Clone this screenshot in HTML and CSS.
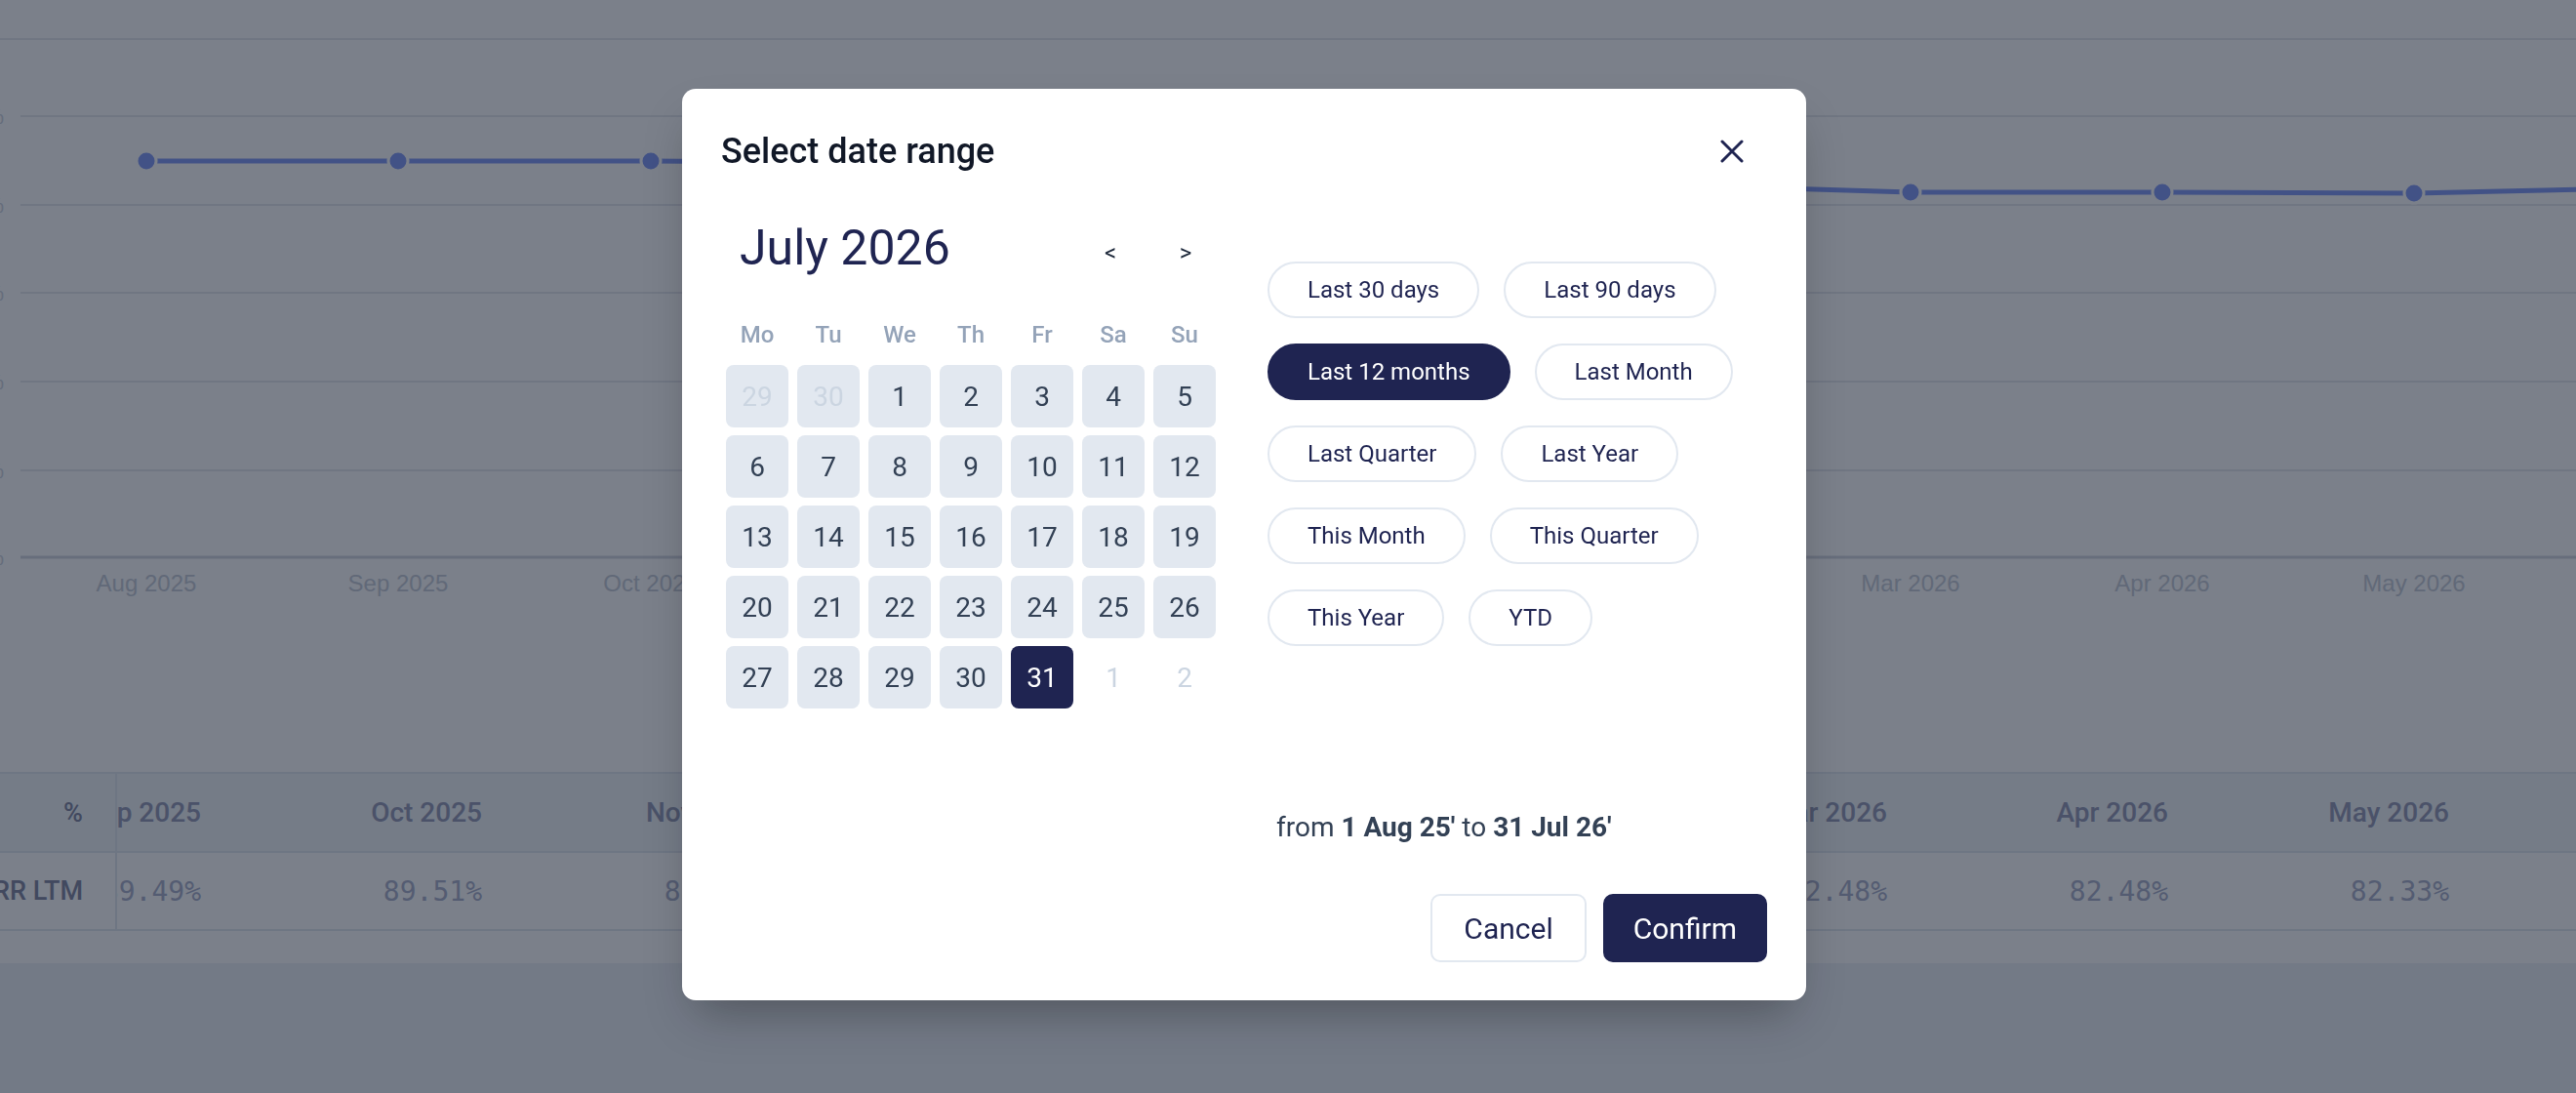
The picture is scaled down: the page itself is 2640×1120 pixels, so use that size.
FILE: index.html
```html
<!DOCTYPE html>
<html lang="en">
<head>
<meta charset="utf-8">
<title>Select date range</title>
<link rel="stylesheet" href="styles.css">
</head>
<body>
<div class="page">
  <section class="card">
    <div class="chart">
      <svg class="chart-svg" viewBox="0 0 2640 700" width="2640" height="700">
        <line class="grid-top" x1="0" y1="40" x2="2640" y2="40"/>
        <g class="grid">
          <line x1="21" y1="119" x2="2640" y2="119"/>
          <line x1="21" y1="210" x2="2640" y2="210"/>
          <line x1="21" y1="300" x2="2640" y2="300"/>
          <line x1="21" y1="391" x2="2640" y2="391"/>
          <line x1="21" y1="482" x2="2640" y2="482"/>
        </g>
        <line class="axis" x1="21" y1="571" x2="2640" y2="571"/>
        <g class="y-labels">
          <text x="4" y="127">100%</text>
          <text x="4" y="218">80%</text>
          <text x="4" y="308">60%</text>
          <text x="4" y="399">40%</text>
          <text x="4" y="490">20%</text>
          <text x="4" y="579">0%</text>
        </g>
        <polyline class="series" points="150,165 408,165 667,165 925,167 1183,173 1442,181 1700,189 1958,197 2216,197 2474,198 2733,192"/>
        <g class="dots">
          <circle cx="150" cy="165" r="10"/>
          <circle cx="408" cy="165" r="10"/>
          <circle cx="667" cy="165" r="10"/>
          <circle cx="925" cy="167" r="10"/>
          <circle cx="1183" cy="173" r="10"/>
          <circle cx="1442" cy="181" r="10"/>
          <circle cx="1700" cy="189" r="10"/>
          <circle cx="1958" cy="197" r="10"/>
          <circle cx="2216" cy="197" r="10"/>
          <circle cx="2474" cy="198" r="10"/>
          <circle cx="2733" cy="192" r="10"/>
        </g>
        <g class="x-labels">
          <text x="150" y="606">Aug 2025</text>
          <text x="408" y="606">Sep 2025</text>
          <text x="667" y="606">Oct 2025</text>
          <text x="925" y="606">Nov 2025</text>
          <text x="1183" y="606">Dec 2025</text>
          <text x="1442" y="606">Jan 2026</text>
          <text x="1700" y="606">Feb 2026</text>
          <text x="1958" y="606">Mar 2026</text>
          <text x="2216" y="606">Apr 2026</text>
          <text x="2474" y="606">May 2026</text>
        </g>
      </svg>
    </div>

    <div class="metrics">
      <div class="metrics-labels">
        <div class="m-head"><span>%</span></div>
        <div class="m-row"><span>GRR LTM</span></div>
      </div>
      <div class="metrics-scroll">
        <div class="metrics-grid">
          <div class="mh">Sep 2025</div>
          <div class="mh">Oct 2025</div>
          <div class="mh">Nov 2025</div>
          <div class="mh">Dec 2025</div>
          <div class="mh">Jan 2026</div>
          <div class="mh">Feb 2026</div>
          <div class="mh">Mar 2026</div>
          <div class="mh">Apr 2026</div>
          <div class="mh">May 2026</div>
          <div class="mh">Jun 2026</div>
          <div class="mv">89.49%</div>
          <div class="mv">89.51%</div>
          <div class="mv">88.20%</div>
          <div class="mv">86.94%</div>
          <div class="mv">85.10%</div>
          <div class="mv">83.62%</div>
          <div class="mv">82.48%</div>
          <div class="mv">82.48%</div>
          <div class="mv">82.33%</div>
          <div class="mv">82.91%</div>
        </div>
      </div>
    </div>
    <div class="metrics-foot"></div>
  </section>
</div>

<div class="overlay">
  <div class="modal" role="dialog" aria-labelledby="dr-title">
    <div class="modal-header">
      <h2 class="modal-title" id="dr-title">Select date range</h2>
      <button class="close-btn" aria-label="Close">
        <svg viewBox="0 0 24 24" width="24" height="24"><path d="M2 2 L22 22 M22 2 L2 22"/></svg>
      </button>
    </div>

    <div class="modal-body">
      <div class="calendar">
        <div class="cal-head">
          <div class="cal-month">July 2026</div>
          <div class="cal-nav">
            <button class="nav-btn" aria-label="Previous month">&lt;</button>
            <button class="nav-btn" aria-label="Next month">&gt;</button>
          </div>
        </div>
        <div class="cal-weekdays">
          <span>Mo</span><span>Tu</span><span>We</span><span>Th</span><span>Fr</span><span>Sa</span><span>Su</span>
        </div>
        <div class="cal-grid">
          <span class="day prev">29</span>
          <span class="day prev">30</span>
          <span class="day">1</span>
          <span class="day">2</span>
          <span class="day">3</span>
          <span class="day">4</span>
          <span class="day">5</span>
          <span class="day">6</span>
          <span class="day">7</span>
          <span class="day">8</span>
          <span class="day">9</span>
          <span class="day">10</span>
          <span class="day">11</span>
          <span class="day">12</span>
          <span class="day">13</span>
          <span class="day">14</span>
          <span class="day">15</span>
          <span class="day">16</span>
          <span class="day">17</span>
          <span class="day">18</span>
          <span class="day">19</span>
          <span class="day">20</span>
          <span class="day">21</span>
          <span class="day">22</span>
          <span class="day">23</span>
          <span class="day">24</span>
          <span class="day">25</span>
          <span class="day">26</span>
          <span class="day">27</span>
          <span class="day">28</span>
          <span class="day">29</span>
          <span class="day">30</span>
          <span class="day selected">31</span>
          <span class="day next">1</span>
          <span class="day next">2</span>
        </div>
      </div>

      <div class="ranges">
        <div class="presets">
          <button class="preset">Last 30 days</button>
          <button class="preset">Last 90 days</button>
          <button class="preset active">Last 12 months</button>
          <button class="preset">Last Month</button>
          <button class="preset">Last Quarter</button>
          <button class="preset">Last Year</button>
          <button class="preset">This Month</button>
          <button class="preset">This Quarter</button>
          <button class="preset">This Year</button>
          <button class="preset">YTD</button>
        </div>
        <p class="summary">from <b>1 Aug 25'</b> to <b>31 Jul 26'</b></p>
      </div>
    </div>

    <div class="modal-footer">
      <button class="btn btn-cancel">Cancel</button>
      <button class="btn btn-confirm">Confirm</button>
    </div>
  </div>
</div>
</body>
</html>
```

FILE: styles.css
```css
* { box-sizing: border-box; }

html, body {
  margin: 0;
  padding: 0;
}

body {
  width: 2640px;
  height: 1120px;
  overflow: hidden;
  background: #eef2f7;
  font-family: Roboto, "Noto Sans", Arial, sans-serif;
}

button {
  font-family: inherit;
  cursor: pointer;
}

/* ---------- background page ---------- */
.card {
  background: #ffffff;
}

.chart-svg {
  display: block;
}

.grid-top,
.grid line {
  stroke: #e6e8ee;
  stroke-width: 2;
}

.axis {
  stroke: #d3d7e0;
  stroke-width: 3;
}

.y-labels text {
  font-family: "Liberation Sans", Arial, sans-serif;
  font-size: 22px;
  fill: #cfd4de;
  text-anchor: end;
}

.x-labels text {
  font-family: "Liberation Sans", Arial, sans-serif;
  font-size: 24px;
  fill: #c6ccd7;
  text-anchor: middle;
}

.series {
  fill: none;
  stroke: #8299f5;
  stroke-width: 5;
  stroke-linejoin: round;
}

.dots circle {
  fill: #8299f5;
  stroke: #ffffff;
  stroke-width: 3;
}

.metrics {
  display: flex;
  margin-top: 91px;
  border-top: 2px solid #e2e8f0;
}

.metrics-labels {
  flex: 0 0 120px;
  border-right: 2px solid #e2e8f0;
  overflow: hidden;
}

.m-head,
.m-row {
  display: flex;
  justify-content: flex-end;
  align-items: center;
  padding-right: 33px;
  white-space: nowrap;
  font-size: 27px;
  font-weight: 500;
  color: #80869f;
  border-bottom: 2px solid #e2e8f0;
}

.m-head {
  height: 81px;
  background: #f1f5f9;
}

.m-row {
  height: 80px;
}

.metrics-scroll {
  flex: 1;
  overflow: hidden;
}

.metrics-grid {
  display: grid;
  grid-template-columns: repeat(10, 288px);
  margin-left: -178px;
}

.mh,
.mv {
  display: flex;
  justify-content: flex-end;
  align-items: center;
  padding-right: 24px;
  white-space: nowrap;
  border-bottom: 2px solid #e2e8f0;
}

.mh {
  height: 81px;
  background: #f1f5f9;
  font-size: 28px;
  font-weight: 500;
  color: #949ab6;
}

.mv {
  height: 80px;
  font-family: "DejaVu Sans Mono", "Liberation Mono", monospace;
  font-size: 28px;
  color: #a9afca;
}

.metrics-foot {
  height: 33px;
}

/* ---------- overlay + modal ---------- */
.overlay {
  position: fixed;
  inset: 0;
  background: rgba(15, 23, 42, 0.55);
  display: flex;
  align-items: center;
  justify-content: center;
  padding-right: 90px;
  padding-bottom: 4px;
}

.modal {
  width: 1152px;
  background: #ffffff;
  border-radius: 14px;
  padding: 40px 40px 39px;
  box-shadow: 0 25px 50px -12px rgba(0, 0, 0, 0.3);
}

.modal-header {
  display: flex;
  align-items: center;
  justify-content: space-between;
  height: 48px;
}

.modal-title {
  margin: 0;
  font-size: 36px;
  line-height: 48px;
  font-weight: 500;
  color: #111827;
}

.close-btn {
  width: 72px;
  height: 48px;
  padding: 0;
  border: none;
  background: none;
  display: flex;
  align-items: center;
  justify-content: center;
}

.close-btn path {
  fill: none;
  stroke: #1f2451;
  stroke-width: 3;
  stroke-linecap: round;
}

.modal-body {
  display: flex;
  gap: 53px;
  margin-top: 40px;
}

/* calendar */
.calendar {
  flex: 0 0 502px;
  margin-left: 5px;
}

.cal-head {
  display: flex;
  align-items: center;
  justify-content: space-between;
  height: 70px;
  padding-right: 9px;
}

.cal-month {
  padding-left: 14px;
  font-size: 50px;
  line-height: 70px;
  color: #1f2451;
}

.cal-nav {
  display: flex;
  gap: 33px;
  padding-top: 10px;
}

.nav-btn {
  width: 44px;
  height: 44px;
  padding: 0;
  border: none;
  background: none;
  font-size: 24px;
  color: #1e293b;
}

.cal-weekdays {
  display: grid;
  grid-template-columns: repeat(7, 64px);
  column-gap: 9px;
  margin-top: 39px;
  font-size: 24px;
  line-height: 30px;
  font-weight: 500;
  color: #94a3b8;
  text-align: center;
}

.cal-grid {
  display: grid;
  grid-template-columns: repeat(7, 64px);
  grid-auto-rows: 64px;
  column-gap: 9px;
  row-gap: 8px;
  margin-top: 16px;
}

.day {
  display: flex;
  align-items: center;
  justify-content: center;
  border-radius: 8px;
  background: #e2e8f0;
  font-size: 28px;
  color: #334155;
}

.day.prev {
  color: #cbd5e1;
}

.day.next {
  background: transparent;
  color: #cbd5e1;
}

.day.selected {
  background: #1f2451;
  color: #ffffff;
}

/* presets */
.ranges {
  flex: 1;
  padding-top: 49px;
}

.presets {
  display: flex;
  flex-wrap: wrap;
  gap: 26px 25px;
}

.preset {
  height: 58px;
  padding: 0 39px;
  border: 2px solid #e2e8f0;
  border-radius: 29px;
  background: #ffffff;
  font-size: 24px;
  color: #1f2451;
}

.preset.active {
  background: #1f2451;
  border-color: #1f2451;
  color: #ffffff;
}

.summary {
  margin: 169px 0 0;
  padding-left: 9px;
  font-size: 28px;
  line-height: 34px;
  color: #334155;
}

.summary b {
  font-weight: 700;
}

/* footer */
.modal-footer {
  display: flex;
  justify-content: flex-end;
  gap: 17px;
  margin-top: 51px;
}

.btn {
  height: 70px;
  padding: 0 32px;
  border-radius: 10px;
  font-size: 30px;
  border: 2px solid #e2e8f0;
}

.btn-cancel {
  background: #ffffff;
  color: #1f2451;
}

.btn-confirm {
  padding: 0 29px;
  background: #1f2451;
  border-color: #1f2451;
  color: #ffffff;
}
```
